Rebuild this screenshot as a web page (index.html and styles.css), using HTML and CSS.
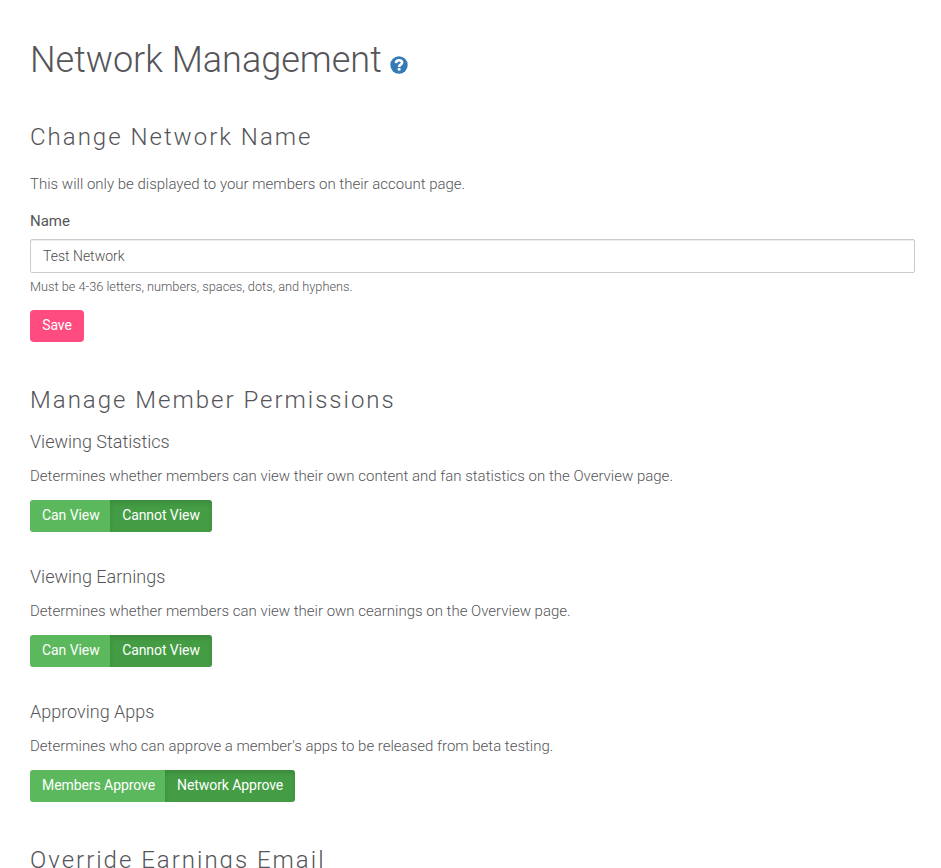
FILE: index.html
```html
<!DOCTYPE html>
<html lang="en">
<head>
<meta charset="utf-8">
<title>Network Management</title>
<link rel="stylesheet" href="styles.css">
</head>
<body>
<main class="page">
  <h1 class="title"><span class="title-text">Network Management</span>
    <svg class="help" viewBox="0 0 18 18" aria-hidden="true"><circle cx="9" cy="9" r="8.7" fill="#337ab7"/><path d="M5.9 7.1C6.1 3.2 12.3 3.5 12.1 6.7C12 8.7 9.1 8.7 9.1 11" fill="none" stroke="#fff" stroke-width="2.6"/><path d="M7.7 12h2.8v2.6H7.7z" fill="#fff"/></svg>
  </h1>
  <section class="section name-section">
    <h2 class="heading">Change Network Name</h2>
    <p class="text name-intro">This will only be displayed to your members on their account page.</p>
    <label class="label" for="name">Name</label>
    <input class="input" id="name" type="text" value="Test Network">
    <p class="hint">Must be 4-36 letters, numbers, spaces, dots, and hyphens.</p>
    <button class="btn btn-save">Save</button>
  </section>
  <section class="section permissions">
    <h2 class="heading">Manage Member Permissions</h2>
    <div class="permission">
      <h3 class="subheading">Viewing Statistics</h3>
      <p class="text">Determines whether members can view their own content and fan statistics on the Overview page.</p>
      <div class="group"><button class="btn first">Can View</button><button class="btn active">Cannot View</button></div>
    </div>
    <div class="permission">
      <h3 class="subheading">Viewing Earnings</h3>
      <p class="text">Determines whether members can view their own cearnings on the Overview page.</p>
      <div class="group"><button class="btn first">Can View</button><button class="btn active">Cannot View</button></div>
    </div>
    <div class="permission">
      <h3 class="subheading">Approving Apps</h3>
      <p class="text">Determines who can approve a member's apps to be released from beta testing.</p>
      <div class="group wide"><button class="btn first">Members Approve</button><button class="btn active">Network Approve</button></div>
    </div>
  </section>
  <section class="section">
    <h2 class="heading">Override Earnings Email</h2>
  </section>
</main>
</body>
</html>
```

FILE: styles.css
```css
* { box-sizing: border-box; }
html { overflow: hidden; }
body {
  margin: 0;
  height: 868px;
  overflow: hidden;
  background: #fff;
  color: #555559;
  font: 300 15px/20px Roboto, sans-serif;
}
h1, h2, h3, p { margin: 0; font-weight: 300; }
.page { padding: 40px 26px 0 30px; }
.title { display: flex; align-items: center; height: 40px; font-size: 36px; line-height: 40px; }
.help { width: 18px; height: 18px; margin: 9px 0 0 8px; }
.heading { height: 28px; font-size: 24px; line-height: 28px; letter-spacing: 2px; white-space: nowrap; }
.name-section { padding-top: 43px; }
.name-intro { margin-top: 23px; }
.label { display: block; margin-top: 17px; font-weight: 400; }
.input {
  display: block;
  width: 100%;
  height: 34px;
  margin-top: 8px;
  padding: 6px 12px;
  border: 1px solid #ccc;
  border-radius: 2px;
  box-shadow: inset 0 1px 1px rgba(0, 0, 0, .075);
  color: #4c4c4c;
  font: 300 14px/20px Roboto, sans-serif;
}
.hint { margin-top: 4px; font-size: 12.75px; line-height: 20px; }
.btn {
  height: 32px;
  padding: 0 12px 2px;
  border: 0;
  background: #5cb85c;
  color: #fff;
  font: 400 14px/20px Roboto, sans-serif;
  letter-spacing: -.07px;
  white-space: nowrap;
}
.btn-save { display: block; width: 54px; margin-top: 13px; border-radius: 4px; background: #ff4c80; }
.permissions { padding-top: 44px; }
.permission { height: 135px; padding-top: 17px; }
.subheading { font-size: 18px; line-height: 22px; }
.permission .text { margin-top: 13px; }
.group { display: flex; margin-top: 14px; }
.first { width: 80px; border-radius: 3px 0 0 3px; }
.active { width: 102px; border-radius: 0 3px 3px 0; background: #449d44; box-shadow: inset 0 3px 5px rgba(0, 0, 0, .125); }
.wide .first { width: 135px; }
.wide .active { width: 130px; }
.permissions + .section { padding-top: 27px; }
```
